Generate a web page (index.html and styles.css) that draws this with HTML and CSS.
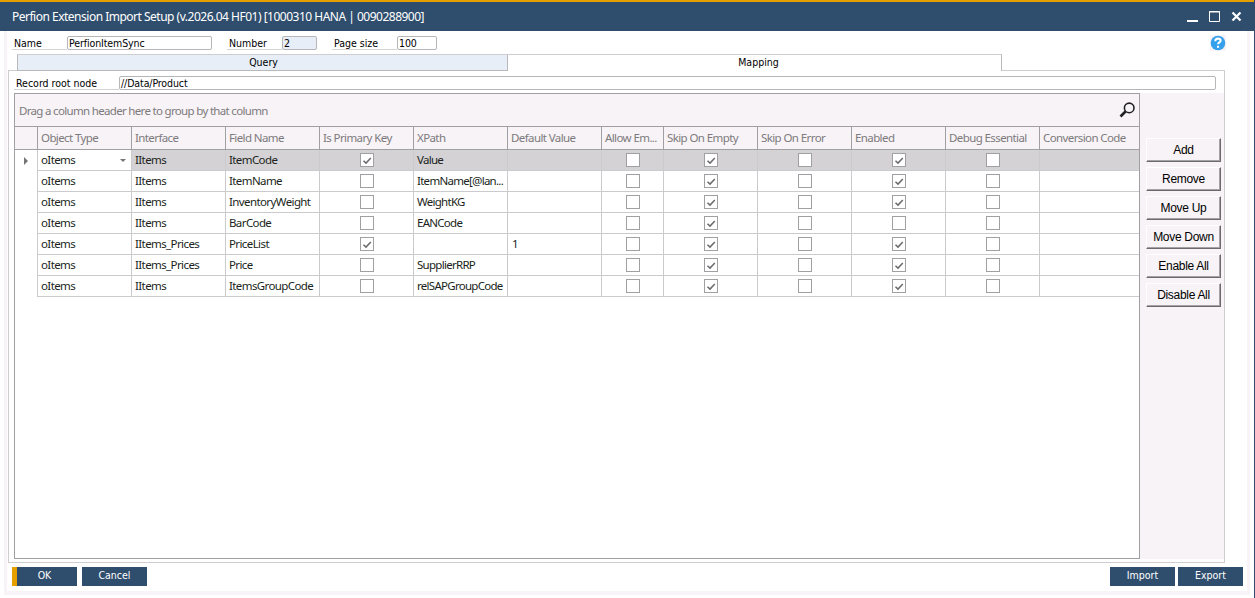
FILE: index.html
```html
<!DOCTYPE html>
<html lang="en">

<head>
    <meta charset="UTF-8">
    <meta name="viewport" content="width=device-width, initial-scale=1.0">
    <title>Perfion Extension Import Setup</title>
    <link rel="stylesheet" href="styles.css">
</head>

<body>
    <header class="titlebar">
        <h1>Perfion Extension Import Setup (v.2026.04 HF01) [1000310 HANA | 0090288900]</h1>
        <svg class="window-buttons" width="56" height="14" viewBox="0 0 56 14" fill="none" stroke="#fff">
            <path d="M0 11h11" stroke-width="2" />
            <path d="M22.5 1.5h10v10h-10z M22 2h11" />
            <path d="M45.5 2.5l8 8m0-8l-8 8" stroke-width="2.2" />
        </svg>
    </header>

    <main class="window">
        <div class="fields">
            <span class="label name-label">Name</span><span class="input name-input">PerfionItemSync</span>
            <span class="label number-label">Number</span><span class="input number-input">2</span>
            <span class="label size-label">Page size</span><span class="input size-input">100</span>
            <svg class="help" width="16" height="16" viewBox="0 0 16 16">
                <path d="M0 0h16v16H0z" fill="#f7f3f6" />
                <circle cx="8" cy="8" r="7.3" fill="#35a0ec" />
                <path d="M5.4 6.3V5.4C5.4 4.1 6.4 3.6 8 3.6s2.6.8 2.6 2.1c0 1.5-2.5 1.5-2.5 3.6" fill="none" stroke="#fff" stroke-width="2.1" />
                <path d="M7 10.8h2.1v2H7z" fill="#fff" />
            </svg>
        </div>

        <nav class="tabs">
            <div class="tab"><span class="query-text">Query</span></div>
            <div class="tab active"><span class="mapping-text">Mapping</span></div>
        </nav>

        <section class="panel">
            <div class="root-node">
                <span class="label root-label">Record root node</span><span class="input root-input">//Data/Product</span>
            </div>
            <div class="mapping">
                <div class="grid">
                    <div class="group-panel">
                        <span class="group-text">Drag a column header here to group by that column</span>
                        <svg width="16" height="16" viewBox="0 0 16 16" fill="none" stroke="#222">
                            <circle cx="10.2" cy="5.9" r="4.8" stroke-width="1.6" />
                            <path d="M6.5 9.5L1.5 14.5" stroke-width="2.6" />
                        </svg>
                    </div>
                    <table>
                        <colgroup>
                            <col class="col-mark">
                            <col span="6">
                            <col class="col-allow">
                            <col span="4">
                            <col class="col-last">
                        </colgroup>
                        <thead>
                            <tr>
                                <th></th>
                                <th>Object Type</th>
                                <th>Interface</th>
                                <th>Field Name</th>
                                <th>Is Primary Key</th>
                                <th>XPath</th>
                                <th>Default Value</th>
                                <th>Allow Em...</th>
                                <th>Skip On Empty</th>
                                <th>Skip On Error</th>
                                <th>Enabled</th>
                                <th>Debug Essential</th>
                                <th>Conversion Code</th>
                            </tr>
                        </thead>
                        <tbody></tbody>
                    </table>
                </div>
                <aside class="actions">
                    <button>Add</button>
                    <button>Remove</button>
                    <button>Move Up</button>
                    <button>Move Down</button>
                    <button>Enable All</button>
                    <button>Disable All</button>
                </aside>
            </div>
        </section>

        <footer>
            <button class="ok">OK</button>
            <button>Cancel</button>
            <button class="import">Import</button>
            <button class="export">Export</button>
        </footer>
    </main>

    <script src="script.js"></script>
</body>

</html>
```
FILE: script.js
```js
// type, interface, field, key, xpath, default, allow empty, skip empty, skip error, enabled, debug
const rows = [
    ['oItems', 'IItems', 'ItemCode', true, 'Value', '', false, true, false, true, false],
    ['oItems', 'IItems', 'ItemName', false, 'ItemName[@lan...', '', false, true, false, true, false],
    ['oItems', 'IItems', 'InventoryWeight', false, 'WeightKG', '', false, true, false, true, false],
    ['oItems', 'IItems', 'BarCode', false, 'EANCode', '', false, true, false, false, false],
    ['oItems', 'IItems_Prices', 'PriceList', true, '', '1', false, true, false, true, false],
    ['oItems', 'IItems_Prices', 'Price', false, 'SupplierRRP', '', false, true, false, true, false],
    ['oItems', 'IItems', 'ItemsGroupCode', false, 'relSAPGroupCode', '', false, true, false, true, false]
];

const tick = '<svg width="12" height="12" viewBox="0 0 12 12"><path d="M2.5 6.8l2.5 2.3 4.8-5" fill="none" stroke="#6b6a6c" stroke-width="1.5"/></svg>';
const tbody = document.querySelector('tbody');

rows.forEach((row, i) => {
    const tr = tbody.insertRow();
    const mark = tr.insertCell();
    mark.className = 'mark';

    row.forEach(value => {
        const td = tr.insertCell();
        if (typeof value === 'boolean') {
            td.className = 'check';
            td.innerHTML = `<span class="box">${value ? tick : ''}</span>`;
        } else {
            td.textContent = value;
        }
    });
    tr.insertCell();

    if (i === 0) {
        tr.className = 'selected';
        mark.innerHTML = '<i class="arrow-right"></i>';
        tr.cells[1].className = 'combo';
        tr.cells[1].innerHTML = '<div><span>oItems</span><i class="arrow-down"></i></div>';
    }
});
```
FILE: styles.css
```css
*,
*::before,
*::after {
    box-sizing: border-box;
}

body {
    margin: 0;
    height: 598px;
    display: flex;
    flex-direction: column;
    overflow: hidden;
    background: #fff;
    border-right: 1px solid #2f4e6d;
    font: 11px/14px 'DejaVu Sans Condensed', 'DejaVu Sans', sans-serif;
    color: #000;
}

.titlebar {
    height: 31px;
    margin-right: -1px;
    display: flex;
    align-items: center;
    justify-content: space-between;
    padding: 0 12px;
    background: #2f4e6d;
    border-top: 2px solid #e5a000;
}

h1 {
    margin: 0;
    font: 12px/18px 'Noto Sans', sans-serif;
    letter-spacing: -.5px;
    color: #fff;
    white-space: nowrap;
}

.window {
    width: 1246px;
    height: 564px;
    margin-left: 4px;
    display: flex;
    flex-direction: column;
    border: solid #f7f3f6;
    border-width: 0 3px 4px;
}

.fields {
    display: flex;
    height: 23px;
    padding: 5px 0 0 5px;
}

.label {
    height: 14px;
    padding-left: 2px;
    border-bottom: 1px solid #d5d4d5;
    font-size: 10.5px;
    line-height: 15px;
    white-space: nowrap;
}

.input {
    height: 14px;
    padding-left: 1px;
    border: 1px solid #b6b5b7;
    border-radius: 2px;
    background: #fff;
    font-size: 10.5px;
    letter-spacing: -.1px;
    line-height: 13px;
    white-space: nowrap;
}

.name-label {
    width: 55px;
}

.name-input {
    width: 145px;
    margin-right: 15px;
}

.number-label {
    width: 55px;
}

.number-input {
    width: 35px;
    margin-right: 15px;
    background: #e7eef7;
}

.size-label {
    width: 65px;
}

.size-input {
    width: 40px;
}

.help {
    margin: -1px 0 0 773px;
}

.tabs {
    display: flex;
    height: 17px;
    margin-left: 10px;
    position: relative;
    z-index: 1;
}

.tab {
    width: 491px;
    height: 17px;
    border: 1px solid #b9b8ba;
    border-top-color: #cfcdcf;
    background: #e7eef7;
    text-align: center;
    font-size: 10.5px;
    line-height: 15px;
}

.tab.active {
    width: 495px;
    margin-left: -1px;
    border-left: 0;
    border-bottom: 0;
    background: #fff;
}

.tab.active::before {
    content: '';
    display: block;
    float: left;
    width: 1px;
    height: 16px;
    background: #b9b8ba;
}

.query-text {
    margin-left: 2px;
}

.mapping-text {
    margin-left: 8px;
}

.panel {
    width: 1217px;
    height: 493px;
    margin: -1px 0 0 1px;
    border: 1px solid #cfcdcf;
    padding: 5px 0 0 5px;
}

.root-node {
    display: flex;
    height: 17px;
}

.root-label {
    width: 105px;
}

.root-input {
    width: 1097px;
}

.mapping {
    display: flex;
    height: 466px;
}

.grid {
    width: 1126px;
    border: 1px solid #a09fa1;
    background: #fff;
    font-family: 'Noto Sans', sans-serif;
    font-size: 11.5px;
    letter-spacing: -.6px;
}

.group-panel {
    height: 33px;
    display: flex;
    align-items: center;
    justify-content: space-between;
    padding: 0 4px;
    border-bottom: 1px solid #a09fa1;
    background: #f7f3f6;
    color: #7d7a7d;
}

.group-text {
    padding-top: 2px;
    letter-spacing: -.68px;
}

table {
    width: 1124px;
    table-layout: fixed;
    border-collapse: separate;
    border-spacing: 0;
}

col {
    width: 94px;
}

.col-mark {
    width: 23px;
}

.col-allow {
    width: 62px;
}

.col-last {
    width: 99px;
}

th,
td {
    padding: 0 0 0 3px;
    overflow: hidden;
    white-space: nowrap;
    text-align: left;
    font-weight: normal;
}

th {
    height: 23px;
    border: solid #a09fa1;
    border-width: 0 1px 1px 0;
    background: #f7f3f6;
    color: #7d7a7d;
}

td {
    height: 21px;
    border: solid #cbcacc;
    border-width: 0 1px 1px 0;
    color: #201f20;
}

/* long xpaths have to fit the column */
td:nth-child(6) {
    letter-spacing: -.72px;
}

th:last-child,
td:last-child {
    border-right: 0;
}

.selected td {
    background: #d4d2d5;
}

.selected .mark,
.selected .combo {
    background: #fff;
}

td.mark {
    border-bottom: 0;
    padding: 0 0 0 9px;
}

td.check {
    padding: 0;
    text-align: center;
}

td:nth-child(7) {
    padding-left: 4px;
}

.combo div {
    display: flex;
    align-items: center;
    justify-content: space-between;
    padding-right: 5px;
}

.arrow-right {
    display: block;
    border: solid transparent;
    border-width: 4px 0 4px 4px;
    border-left-color: #767477;
}

.arrow-down {
    border: solid transparent;
    border-width: 3px 3px 0;
    border-top-color: #767477;
}

.box {
    display: block;
    width: 14px;
    height: 14px;
    margin: 0 auto;
    border: 1px solid #a09fa1;
    background: #fff;
}

.box svg {
    display: block;
}

.actions {
    width: 84px;
    display: flex;
    flex-direction: column;
    gap: 5px;
    padding: 45px 0 0 6px;
    background: #f7f3f6;
}

button {
    padding: 0;
    font: inherit;
    white-space: nowrap;
}

.actions button {
    width: 75px;
    height: 24px;
    border: 1px solid #fff;
    border-right-color: #6c6a6c;
    border-bottom-color: #6c6a6c;
    box-shadow: inset -1px -1px #a5a2a5;
    background: #f7f3f6;
    color: #000;
    font: 12px/16px 'Liberation Sans', Arial, sans-serif;
    letter-spacing: -.3px;
}

footer {
    display: flex;
    padding: 4px 4px 0 5px;
}

footer button {
    width: 65px;
    height: 19px;
    border: 0;
    background: #2f4e6d;
    color: #fff;
    font-size: 10.5px;
    line-height: 17px;
    padding-bottom: 2px;
}

.ok {
    margin-right: 5px;
    padding-right: 5px;
    border-left: 5px solid #e5a000;
}

.import {
    margin: 0 3px 0 auto;
}
```
